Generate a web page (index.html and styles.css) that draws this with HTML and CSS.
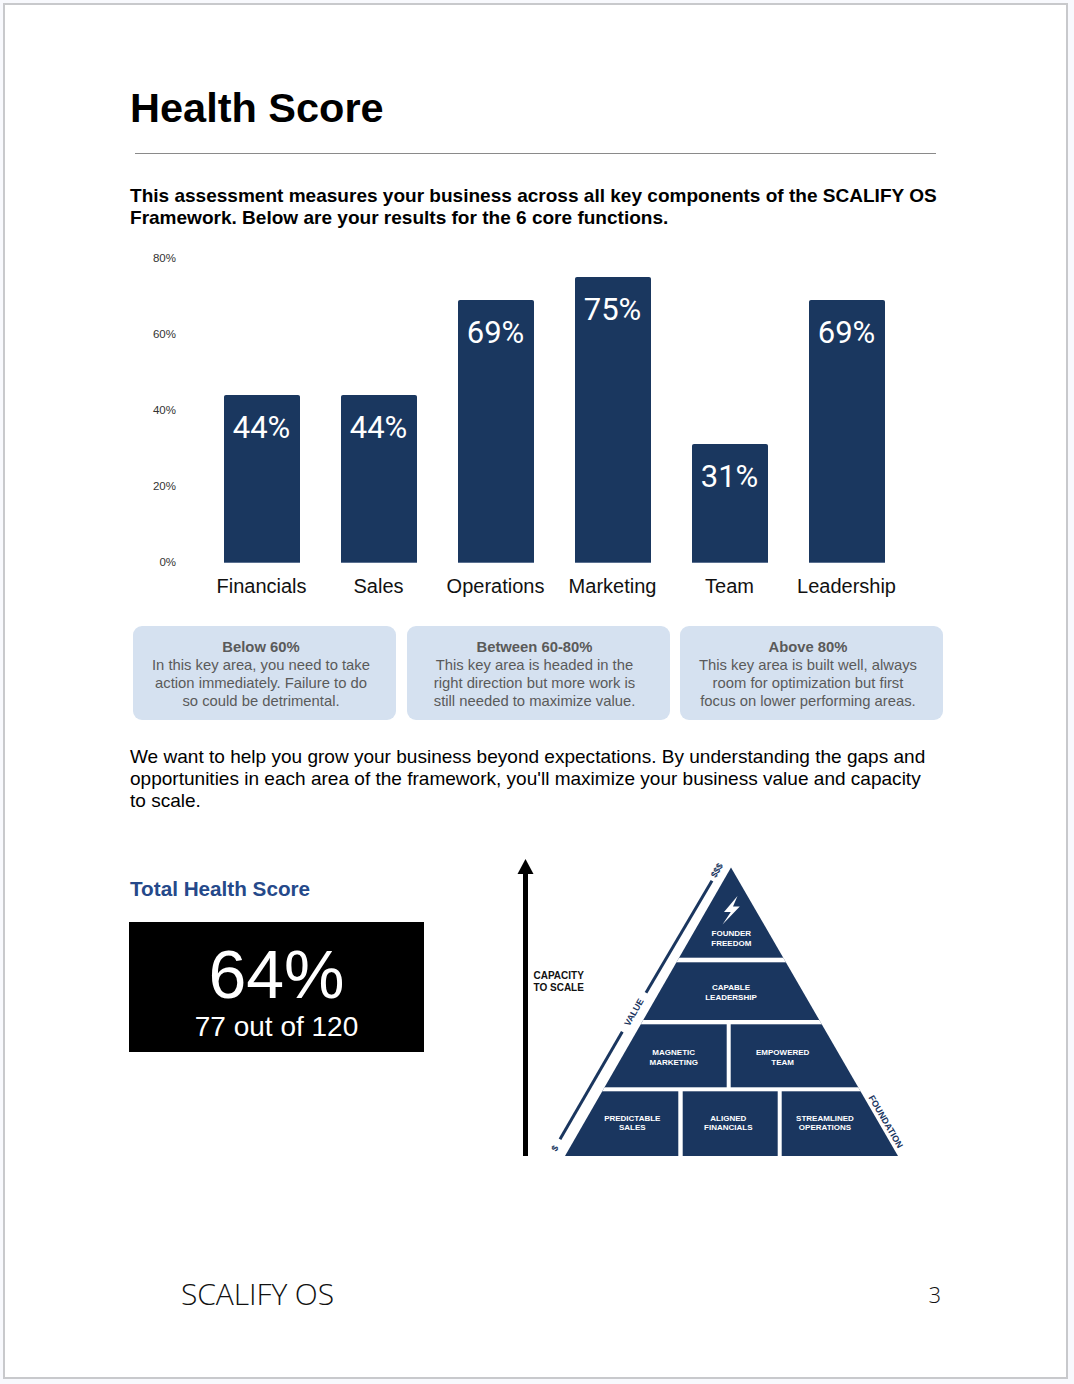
FILE: index.html
```html
<!DOCTYPE html>
<html lang="en">
<head>
<meta charset="utf-8">
<title>Health Score</title>
<link rel="stylesheet" href="styles.css">
</head>
<body>
<div class="page">
  <h1 class="title">Health Score</h1>
  <div class="rule"></div>
  <p class="intro">This assessment measures your business across all key components of the SCALIFY OS Framework. Below are your results for the 6 core functions.</p>

  <div class="chart">
    <div class="yaxis">
      <div class="tick">80%</div>
      <div class="tick">60%</div>
      <div class="tick">40%</div>
      <div class="tick">20%</div>
      <div class="tick">0%</div>
    </div>
    <div class="plot">
      <div class="col">
        <div class="barwrap"><div class="bar" style="height:167px"><span class="val">44%</span></div></div>
        <div class="cat">Financials</div>
      </div>
      <div class="col">
        <div class="barwrap"><div class="bar" style="height:167px"><span class="val">44%</span></div></div>
        <div class="cat">Sales</div>
      </div>
      <div class="col">
        <div class="barwrap"><div class="bar" style="height:262px"><span class="val">69%</span></div></div>
        <div class="cat">Operations</div>
      </div>
      <div class="col">
        <div class="barwrap"><div class="bar" style="height:285px"><span class="val">75%</span></div></div>
        <div class="cat">Marketing</div>
      </div>
      <div class="col">
        <div class="barwrap"><div class="bar" style="height:118px"><span class="val">31%</span></div></div>
        <div class="cat">Team</div>
      </div>
      <div class="col">
        <div class="barwrap"><div class="bar" style="height:262px"><span class="val">69%</span></div></div>
        <div class="cat">Leadership</div>
      </div>
    </div>
  </div>

  <div class="legend">
    <div class="lbox">
      <div class="lhead">Below 60%</div>
      <div class="lbody">In this key area, you need to take action immediately. Failure to do so could be detrimental.</div>
    </div>
    <div class="lbox">
      <div class="lhead">Between 60-80%</div>
      <div class="lbody">This key area is headed in the right direction but more work is still needed to maximize value.</div>
    </div>
    <div class="lbox">
      <div class="lhead">Above 80%</div>
      <div class="lbody">This key area is built well, always room for optimization but first focus on lower performing areas.</div>
    </div>
  </div>

  <p class="para">We want to help you grow your business beyond expectations. By understanding the gaps and opportunities in each area of the framework, you'll maximize your business value and capacity to scale.</p>

  <div class="bottom">
    <div class="total">
      <h2 class="total-head">Total Health Score</h2>
      <div class="scorebox">
        <div class="score-pct">64%</div>
        <div class="score-sub">77 out of 120</div>
      </div>
    </div>
    <svg class="pyramid" width="405" height="315" viewBox="510 850 405 315" xmlns="http://www.w3.org/2000/svg">
      <defs>
        <clipPath id="tri">
          <polygon points="731,867.5 565,1156 898,1156"/>
        </clipPath>
      </defs>
      <!-- capacity arrow -->
      <rect x="523" y="872" width="5" height="284" fill="#000"/>
      <polygon points="525.5,859 517.5,874 533.5,874" fill="#000"/>
      <text class="cap" x="533.5" y="979">CAPACITY</text>
      <text class="cap" x="533.5" y="991">TO SCALE</text>

      <!-- value line -->
      <line x1="712" y1="880.7" x2="646" y2="992.7" stroke="#1a365f" stroke-width="3"/>
      <line x1="622.3" y1="1031.7" x2="560" y2="1139.3" stroke="#1a365f" stroke-width="3"/>
      <text class="side" transform="translate(717 870.3) rotate(-60)">$$$</text>
      <text class="side" transform="translate(634 1012.3) rotate(-60)">VALUE</text>
      <text class="side" transform="translate(555 1148.3) rotate(-60)">$</text>
      <text class="side" transform="translate(885.7 1121.7) rotate(60)">FOUNDATION</text>

      <!-- pyramid -->
      <polygon points="731,867.5 565,1156 898,1156" fill="#1a365f"/>
      <g clip-path="url(#tri)" fill="#fff">
        <rect x="560" y="957.7" width="345" height="4.6"/>
        <rect x="560" y="1020" width="345" height="4.3"/>
        <rect x="560" y="1087.3" width="345" height="4"/>
        <rect x="726.7" y="1024" width="4" height="64"/>
        <rect x="678.3" y="1091" width="4.4" height="66"/>
        <rect x="777.7" y="1091" width="4" height="66"/>
      </g>
      <path d="M737.5 896 L724 912 L730.8 912 L722.5 924.5 L739.8 906.5 L733 906.5 Z" fill="#fff"/>
      <g class="tier">
        <text x="731.3" y="936">FOUNDER</text>
        <text x="731.3" y="945.6">FREEDOM</text>
        <text x="731" y="990">CAPABLE</text>
        <text x="731" y="999.6">LEADERSHIP</text>
        <text x="673.7" y="1055.2">MAGNETIC</text>
        <text x="673.7" y="1064.9">MARKETING</text>
        <text x="782.7" y="1055.2">EMPOWERED</text>
        <text x="782.7" y="1064.9">TEAM</text>
        <text x="632.3" y="1120.6">PREDICTABLE</text>
        <text x="632.3" y="1130.2">SALES</text>
        <text x="728.3" y="1120.6">ALIGNED</text>
        <text x="728.3" y="1130">FINANCIALS</text>
        <text x="825" y="1120.6">STREAMLINED</text>
        <text x="825" y="1130">OPERATIONS</text>
      </g>
    </svg>
  </div>

  <div class="footer">
    <span class="brand">SCALIFY OS</span>
    <span class="pagenum">3</span>
  </div>
</div>
</body>
</html>
```

FILE: styles.css
```css
html, body {
  margin: 0;
  padding: 0;
}
body {
  background: #f8f9fd;
  font-family: "Liberation Sans", Arial, Helvetica, sans-serif;
  color: #000;
}
.page {
  box-sizing: border-box;
  margin: 3px 0 0 3px;
  width: 1065px;
  height: 1376px;
  border: 2px solid #c8c9cc;
  background: #fff;
  padding: 79px 0 0 125px;
  display: flex;
  flex-direction: column;
}
.page > * {
  width: 811px;
}
.title {
  margin: 0;
  font-size: 41.5px;
  line-height: 48px;
  font-weight: 700;
}
.rule {
  margin: 21px 0 0 5px;
  width: 801px;
  height: 1px;
  background: #8a8a8a;
}
.intro {
  margin: 31px 0 0 0;
  font-size: 19.05px;
  line-height: 22px;
  font-weight: 700;
}
.chart {
  margin-top: 29px;
  display: flex;
  align-items: flex-start;
}
.yaxis {
  width: 46px;
  height: 304px;
  display: flex;
  flex-direction: column;
  justify-content: space-between;
  align-items: flex-end;
  font-size: 11.5px;
  color: #333;
}
.tick {
  height: 0;
  line-height: 0;
}
.plot {
  margin-left: 27px;
  display: flex;
}
.col {
  width: 117px;
  display: flex;
  flex-direction: column;
  align-items: center;
}
.barwrap {
  height: 304px;
  width: 100%;
  display: flex;
  justify-content: center;
  align-items: flex-end;
}
.bar {
  width: 76px;
  background: #1a375f;
  border-radius: 2px 2px 0 0;
  box-shadow: 0 1px 0 #5a7090;
  display: flex;
  justify-content: center;
  align-items: flex-start;
}
.val {
  padding-top: 15px;
  font-family: Roboto, "Liberation Sans", sans-serif;
  font-size: 31px;
  line-height: 36px;
  color: #fff;
}
.cat {
  margin-top: 12px;
  font-size: 20px;
  line-height: 24px;
  color: #111;
  white-space: nowrap;
}
.legend {
  margin: 28px 0 0 3px;
  display: grid;
  grid-template-columns: repeat(3, 1fr);
  gap: 10.5px;
  width: 810px !important;
}
.lbox {
  box-sizing: border-box;
  height: 94px;
  padding: 12px 25px 0 18px;
  background: #d5e1f0;
  border-radius: 9px;
  text-align: center;
  color: #5a5a5a;
  font-size: 14.8px;
  line-height: 18px;
}
.lhead {
  font-weight: 700;
}
.para {
  margin: 26px 0 0 0;
  font-size: 19.05px;
  line-height: 22px;
  width: 806px;
}
.bottom {
  margin-top: 38px;
  display: flex;
  align-items: flex-start;
  width: auto !important;
}
.total {
  width: 295px;
  margin-left: -1px;
  padding-top: 27px;
}
.total-head {
  margin: 0 0 0 1px;
  font-size: 20.7px;
  line-height: 24px;
  font-weight: 700;
  color: #25498a;
}
.scorebox {
  margin-top: 21px;
  box-sizing: border-box;
  height: 130px;
  padding-top: 18px;
  background: #000;
  color: #fff;
  text-align: center;
}
.score-pct {
  font-size: 68px;
  line-height: 68px;
}
.score-sub {
  margin-top: 3px;
  font-size: 28px;
  line-height: 32px;
}
.pyramid {
  display: block;
  margin-left: 86px;
}
.pyramid .cap {
  font-family: "Liberation Sans", Arial, sans-serif;
  font-weight: 700;
  font-size: 10px;
  fill: #111;
}
.pyramid .side {
  font-family: "Liberation Sans", Arial, sans-serif;
  font-weight: 700;
  font-size: 9px;
  fill: #1a365f;
  text-anchor: middle;
  dominant-baseline: central;
}
.pyramid .tier text {
  font-family: "Liberation Sans", Arial, sans-serif;
  font-weight: 700;
  font-size: 8px;
  fill: #fff;
  text-anchor: middle;
}
.footer {
  margin-top: auto;
  margin-bottom: 66px;
  display: flex;
  justify-content: space-between;
  align-items: center;
  box-sizing: border-box;
  padding-left: 51px;
  width: 811px;
  font-family: "Open Sans", "Liberation Sans", sans-serif;
  font-weight: 300;
  color: #111;
}
.brand {
  font-size: 30px;
  line-height: 34px;
  letter-spacing: -0.1px;
}
.pagenum {
  font-size: 22px;
  line-height: 34px;
}
```
